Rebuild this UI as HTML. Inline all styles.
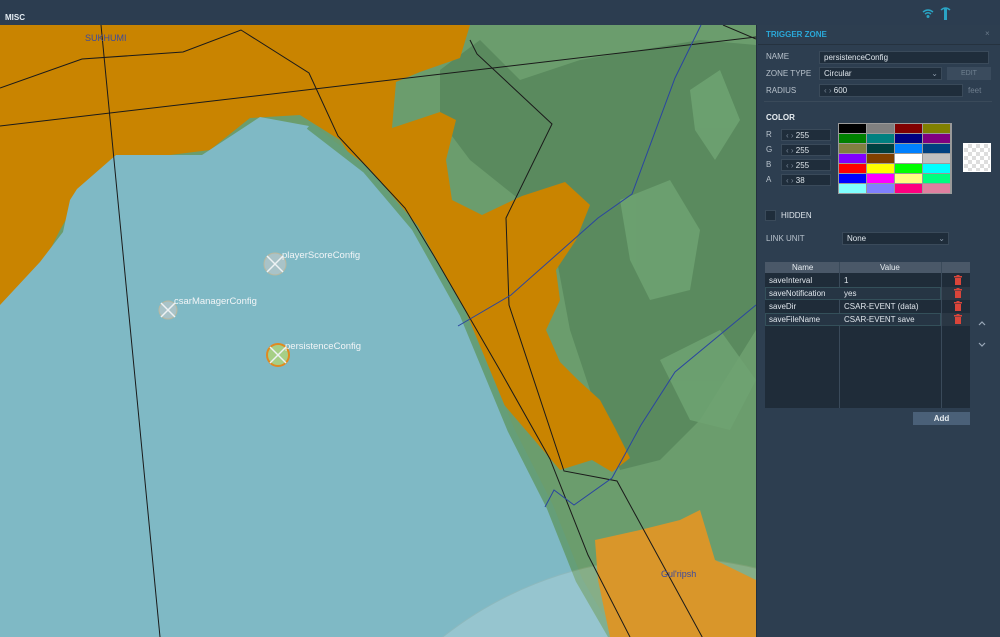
<!DOCTYPE html>
<html><head><meta charset="utf-8"><style>
*{margin:0;padding:0;box-sizing:border-box}
html,body{width:1000px;height:637px;overflow:hidden}
body{background:#2c3e50;font-family:"Liberation Sans","DejaVu Sans",sans-serif;position:relative;color:#c8d0d8}
.top{position:absolute;left:0;top:0;width:1000px;height:25px;background:#2c3d50}
.misc{position:absolute;left:5px;top:13px;font-size:8px;font-weight:bold;color:#e6eef4}
.map{position:absolute;left:0;top:25px}
.panel{position:absolute;left:756px;top:25px;width:244px;height:612px;background:#2d3e50;border-left:1px solid #22303e}
.t{position:absolute;font-size:8px;color:#b8c2cc;line-height:10px}
.in{position:absolute;background:#1f2d3b;border:1px solid #3a4a5a;font-size:8px;color:#dfe6ec;padding-left:4px;line-height:11px;overflow:hidden}
.g{position:absolute;left:839px;top:124px;display:grid;grid-template-columns:repeat(4,27px);grid-auto-rows:9px;grid-gap:1px}
.row{height:13px;position:relative}
.row span{position:absolute;top:2px}
.tr{position:absolute;left:189px;top:1px}
</style></head><body>
<div class="top"></div>
<div class="misc">MISC</div>
<svg style="position:absolute;left:921px;top:7px" width="40" height="14">
<path d="M2 5 Q7 1 12 5 M4 7 Q7 4.5 10 7" stroke="#2aa4c4" stroke-width="1.5" fill="none"/><circle cx="7" cy="9.5" r="1.5" fill="#2aa4c4"/>
<rect x="23" y="1" width="3" height="12" fill="#2aa4c4"/><path d="M20 3 Q24.5 -1 29 3" stroke="#2aa4c4" stroke-width="1.5" fill="none"/>
</svg>
<svg class="map" width="756" height="612" viewBox="0 25 756 612">
<rect x="0" y="25" width="756" height="612" fill="#6b9d6d"/>
<path d="M440 70 L480 40 L520 80 L580 60 L640 50 L700 40 L756 45 L756 330 L700 420 L660 460 L620 470 L600 420 L570 330 L555 250 L520 200 L470 160 L440 120 Z" fill="#5a8a5e"/>
<g fill="#6fa372" opacity="0.85"><path d="M620 200 L670 180 L700 230 L690 290 L650 300 L630 260 Z"/><path d="M660 360 L720 330 L756 380 L730 430 L690 420 Z"/><path d="M690 90 L720 70 L740 120 L715 160 L695 130 Z"/></g>
<path d="M0 25 L470 25 L460 58 L420 72 L396 82 L392 128 L440 112 L456 120 L446 160 L452 200 L482 215 L522 196 L565 182 L590 205 L576 240 L556 270 L560 300 L546 330 L560 362 L578 380 L600 400 L615 428 L630 458 L612 472 L592 460 L560 470 L500 400 L420 260 L340 140 L300 115 L250 118 L210 150 L170 155 L110 160 L80 195 L60 230 L25 300 L0 310 Z" fill="#c98400"/>
<path d="M0 305 L40 262 L63 232 L70 200 L77 189 L116 155 L202 155 L260 117 L309 126 L366 170 L415 228 L463 314 L511 430 L550 507 L579 580 L612 637 L0 637 Z" fill="#7fb9c5"/>
<path d="M309 126 L366 170 L415 228 L463 314 L511 430 L550 507 L579 580 L612 637" stroke="#659e78" stroke-width="7" fill="none"/>
<circle cx="670" cy="924" r="366" fill="#ffffff" opacity="0.18" stroke="#c9b79a" stroke-width="1"/>
<path d="M595 540 L640 530 L680 520 L700 510 L715 560 L756 580 L756 637 L610 637 L598 580 Z" fill="#d9962a"/>
<g stroke="#1a1a1a" stroke-width="1" fill="none">
<path d="M0 126 L756 37"/>
<path d="M0 88 L82 59 L183 52 L241 30 L309 73 L338 136 L405 208 L434 256 L501 372 L550 459 L588 555 L630 637"/>
<path d="M101 25 L160 637"/>
<path d="M470 40 L477 54 L552 124 L506 218 L509 305 L564 471 L617 481 L718 666"/>
<path d="M723 25 L756 39"/>
</g>
<g stroke="#2a45a0" stroke-width="1" fill="none"><path d="M701 25 L675 78 L632 194 L598 218 L511 295 L458 326"/><path d="M756 305 L733 324 L675 372 L641 425 L612 478 L574 505 L554 490 L545 507"/></g>
<text x="85" y="41" font-size="9" fill="#3a4aa0">SUKHUMI</text>
<text x="661" y="577" font-size="9" fill="#3a4aa0">Gul'ripsh</text>
<g stroke="#eef2f4" stroke-width="1.5">
<circle cx="275" cy="264" r="11" fill="#a9c3c8" stroke="#b8b8a0" stroke-width="1"/><path d="M267 256 L283 272 M283 256 L267 272"/>
<circle cx="168" cy="310" r="9" fill="#a9c3c8" stroke="#b8b8a0" stroke-width="1"/><path d="M161 303 L175 317 M175 303 L161 317"/>
<circle cx="278" cy="355" r="11" fill="#a6cf86" stroke="#e08a20" stroke-width="2"/><path d="M270 347 L286 363 M286 347 L270 363"/>
</g>
<g font-size="9.5" fill="#f2f5f7">
<text x="282" y="258">playerScoreConfig</text><text x="174" y="304">csarManagerConfig</text><text x="285" y="349">persistenceConfig</text></g>
</svg>
<div class="panel"></div>
<div class="t" style="left:766px;top:30px;color:#2aa8d8;font-weight:bold">TRIGGER ZONE</div>
<div class="t" style="left:985px;top:29px;color:#6a7a8a">×</div>
<div style="position:absolute;left:758px;top:44px;width:242px;height:1px;background:#25323f"></div>
<div class="t" style="left:766px;top:52px">NAME</div>
<div class="in" style="left:819px;top:51px;width:170px;height:13px">persistenceConfig</div>
<div class="t" style="left:766px;top:69px">ZONE TYPE</div>
<div class="in" style="left:819px;top:67px;width:123px;height:13px">Circular<span style="float:right;padding-right:3px;color:#8a98a8">⌄</span></div>
<div style="position:absolute;left:947px;top:67px;width:44px;height:13px;background:#3a4b5d;color:#6f8090;font-size:7px;text-align:center;line-height:13px">EDIT</div>
<div class="t" style="left:766px;top:86px">RADIUS</div>
<div class="in" style="left:819px;top:84px;width:144px;height:13px"><span style="color:#7a8898">‹ ›</span> 600</div>
<div class="t" style="left:968px;top:86px;color:#6f7e8e">feet</div>
<div style="position:absolute;left:764px;top:101px;width:228px;height:1px;background:#3a4a5a"></div>
<div class="t" style="left:766px;top:113px;color:#e8eef2;font-weight:bold">COLOR</div>
<div class="t" style="left:766px;top:130px">R</div><div class="in" style="left:781px;top:129px;width:50px;height:12px"><span style="color:#7a8898">‹ ›</span> 255</div>
<div class="t" style="left:766px;top:145px">G</div><div class="in" style="left:781px;top:144px;width:50px;height:12px"><span style="color:#7a8898">‹ ›</span> 255</div>
<div class="t" style="left:766px;top:160px">B</div><div class="in" style="left:781px;top:159px;width:50px;height:12px"><span style="color:#7a8898">‹ ›</span> 255</div>
<div class="t" style="left:766px;top:175px">A</div><div class="in" style="left:781px;top:174px;width:50px;height:12px"><span style="color:#7a8898">‹ ›</span> 38</div>
<div style="position:absolute;left:838px;top:123px;width:114px;height:71px;background:#9a9a9a"></div>
<div class="g">
<div style="background:#000"></div><div style="background:#808080"></div><div style="background:#800000"></div><div style="background:#808000"></div>
<div style="background:#008000"></div><div style="background:#008080"></div><div style="background:#000080"></div><div style="background:#800080"></div>
<div style="background:#808040"></div><div style="background:#004040"></div><div style="background:#0080ff"></div><div style="background:#004080"></div>
<div style="background:#8000ff"></div><div style="background:#804000"></div><div style="background:#fff"></div><div style="background:#c0c0c0"></div>
<div style="background:#f00"></div><div style="background:#ff0"></div><div style="background:#0f0"></div><div style="background:#0ff"></div>
<div style="background:#00f"></div><div style="background:#f0f"></div><div style="background:#ffff80"></div><div style="background:#00ff80"></div>
<div style="background:#80ffff"></div><div style="background:#8080ff"></div><div style="background:#ff0080"></div><div style="background:#e080a0"></div>
</div>
<div style="position:absolute;left:963px;top:143px;width:28px;height:29px;border:1px solid #fff;background-color:#fff;background-image:linear-gradient(45deg,#ddd 25%,transparent 25%,transparent 75%,#ddd 75%),linear-gradient(45deg,#ddd 25%,transparent 25%,transparent 75%,#ddd 75%);background-size:8px 8px;background-position:0 0,4px 4px"></div>
<div style="position:absolute;left:765px;top:210px;width:11px;height:11px;background:#1f2d3b;border:1px solid #3a4a5a"></div>
<div class="t" style="left:781px;top:211px;color:#dfe6ec">HIDDEN</div>
<div class="t" style="left:766px;top:234px">LINK UNIT</div>
<div class="in" style="left:842px;top:232px;width:107px;height:13px">None<span style="float:right;padding-right:3px;color:#8a98a8">⌄</span></div>
<div style="position:absolute;left:765px;top:262px;width:205px;height:146px;background:#1f2c39"></div>
<div style="position:absolute;left:765px;top:262px;width:205px;height:11px;background:#4a5868"></div>
<div style="position:absolute;left:839px;top:262px;width:1px;height:146px;background:#3a4a5a"></div>
<div style="position:absolute;left:941px;top:262px;width:1px;height:146px;background:#3a4a5a"></div>
<div class="t" style="left:792px;top:263px;color:#e6ecf0">Name</div>
<div class="t" style="left:880px;top:263px;color:#e6ecf0">Value</div>
<div style="position:absolute;left:765px;top:274px;width:205px;font-size:8px;color:#e0e6ec">
<div class="row"><span style="left:4px">saveInterval</span><span style="left:79px">1</span></div>
<div class="row" style="background:#263544;outline:1px solid #34505a;outline-offset:-1px;width:176px"><span style="left:4px">saveNotification</span><span style="left:79px">yes</span></div>
<div class="row"><span style="left:4px">saveDir</span><span style="left:79px">CSAR-EVENT (data)</span></div>
<div class="row" style="background:#263544;outline:1px solid #34505a;outline-offset:-1px;width:176px"><span style="left:4px">saveFileName</span><span style="left:79px">CSAR-EVENT save</span></div>
</div>
<div style="position:absolute;left:942px;top:287px;width:28px;height:13px;background:#2a3744"></div>
<div style="position:absolute;left:942px;top:313px;width:28px;height:13px;background:#2a3744"></div>
<svg style="position:absolute;left:953px;top:275px" width="10" height="50">
<g fill="#d9453a"><rect x="1" y="1" width="8" height="1.5"/><rect x="3.5" y="0" width="3" height="1"/><rect x="2" y="3" width="6" height="7"/>
<rect x="1" y="14" width="8" height="1.5"/><rect x="3.5" y="13" width="3" height="1"/><rect x="2" y="16" width="6" height="7"/>
<rect x="1" y="27" width="8" height="1.5"/><rect x="3.5" y="26" width="3" height="1"/><rect x="2" y="29" width="6" height="7"/>
<rect x="1" y="40" width="8" height="1.5"/><rect x="3.5" y="39" width="3" height="1"/><rect x="2" y="42" width="6" height="7"/></g>
</svg>
<svg style="position:absolute;left:977px;top:320px" width="10" height="30">
<path d="M2 5 L5 2 L8 5 M2 23 L5 26 L8 23" stroke="#9aa8b8" stroke-width="1.2" fill="none"/>
</svg>
<div style="position:absolute;left:913px;top:412px;width:57px;height:13px;background:#4a6078;color:#e6ecf0;font-size:8px;font-weight:bold;text-align:center;line-height:13px">Add</div>
</body></html>
